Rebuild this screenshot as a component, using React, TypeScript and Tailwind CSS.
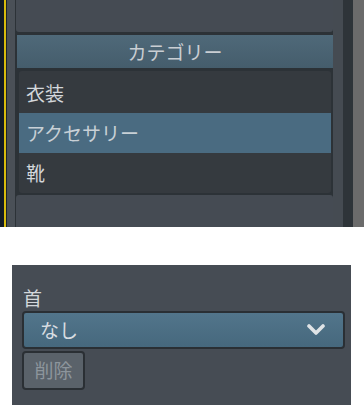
import React from "react";

const font = { fontFamily: '"Noto Sans CJK JP", "Noto Sans", sans-serif' };

export default function App() {
  return (
    <div className="w-[364px] h-[405px] bg-white overflow-hidden" style={font}>
      {/* top region */}
      <div className="flex h-[227px]">
        <div className="w-[4px] bg-[#131b25]" />
        <div className="w-[2px] bg-[#d8bb0c]" />
        <div className="w-[1px] bg-[#1c232a]" />
        <div className="w-[8px] bg-[#4a5057]" />
        <div className="w-[318px] bg-[#2c3237] flex flex-col">
          <div className="ml-[1px] h-[32px] bg-[#454b53] rounded-b-[3px]" />
          <div className="ml-[2px] mt-[3px] h-[33px] bg-gradient-to-b from-[#4f6979] to-[#455d6c] flex items-center justify-center text-[19px] leading-none text-[#c9ced3]">
            カテゴリー
          </div>
          <div className="ml-[4px] mr-[2px] mt-[3px] h-[122px] bg-[#353a3f] rounded-[3px] flex flex-col pt-[2px] text-[19px] text-[#d3d7db]">
            <div className="h-[40px] flex items-center pl-[7px]">衣装</div>
            <div className="h-[40px] flex items-center pl-[7px] bg-[#4a6b81] text-[#c8d0d6]">アクセサリー</div>
            <div className="h-[40px] flex items-center pl-[7px]">靴</div>
          </div>
          <div className="ml-[1px] mt-[2px] flex-1 bg-[#454b53] rounded-t-[3px]" />
        </div>
        <div className="w-[10px] bg-[#454b52]" />
        <div className="w-[10px] bg-[#2e3439]" />
        <div className="flex-1 bg-[#6b6b6b]" />
      </div>
      {/* gap */}
      <div className="h-[38px]" />
      {/* bottom panel */}
      <div className="ml-[12px] w-[339px] h-[140px] bg-[#464c54] pt-[21px] pl-[10px] pr-[6px]">
        <div className="h-[24px] text-[19px] leading-[24px] text-[#d3d7db] pl-[1px]">首</div>
        <div className="mt-[1px] h-[38px] rounded-[4px] border-2 border-[#2a2f34] bg-gradient-to-b from-[#52758b] to-[#46687d] flex items-center justify-between pl-[16px] pr-[18px] text-[19px] text-[#d8dde1]">
          <span>なし</span>
          <svg width="18" height="12" viewBox="0 0 18 12">
            <path d="M2 2 L9 9 L16 2" fill="none" stroke="#dfe3e6" strokeWidth="3.6" strokeLinecap="round" strokeLinejoin="round" />
          </svg>
        </div>
        <div className="mt-[2px] w-[63px] h-[39px] rounded-[4px] border-2 border-[#2a2f34] bg-[#5a626a] flex items-center justify-center text-[19px] text-[#8d959c]">
          削除
        </div>
      </div>
    </div>
  );
}
